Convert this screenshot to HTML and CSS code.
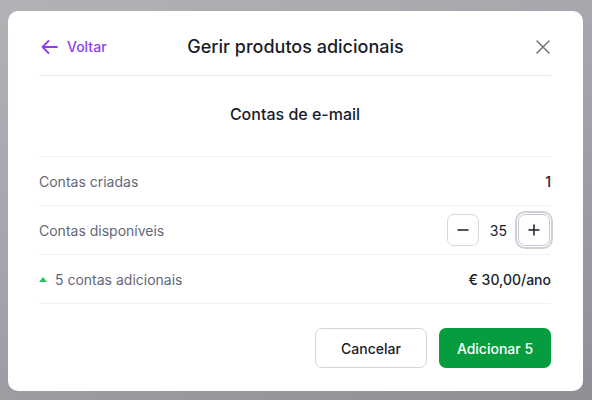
FILE: index.html
```html
<!DOCTYPE html>
<html>
<head>
<meta name="viewport" content="width=device-width, initial-scale=1">
<link rel="stylesheet" href="styles.css">
</head>
<body>

<div class="modal">
  <div class="modal-header">
    <a class="back-link" href="#">
      <svg width="19" height="18" viewBox="0 0 19 18" fill="none" stroke="currentColor" stroke-width="1.8" stroke-linecap="round" stroke-linejoin="round"><path d="M17 9H2.5M8.5 3L2.5 9l6 6"/></svg>
      Voltar
    </a>
    <h2 class="modal-title">Gerir produtos adicionais</h2>
    <span class="close-btn">
      <svg width="16" height="16" viewBox="0 0 16 16" fill="none" stroke="currentColor" stroke-width="1.5" stroke-linecap="round"><path d="M2 2l12 12M14 2L2 14"/></svg>
    </span>
  </div>

  <h3 class="section-title">Contas de e-mail</h3>

  <ul class="info-list">
    <li>
      <span class="label">Contas criadas</span>
      <span class="value">1</span>
    </li>
    <li>
      <span class="label">Contas disponíveis</span>
      <div class="stepper">
        <button class="step-btn">
          <svg width="14" height="14" viewBox="0 0 14 14" stroke="currentColor" stroke-width="1.5" stroke-linecap="round"><path d="M2 7h10"/></svg>
        </button>
        <span class="step-value">35</span>
        <button class="step-btn focused">
          <svg width="14" height="14" viewBox="0 0 14 14" stroke="currentColor" stroke-width="1.5" stroke-linecap="round"><path d="M2 7h10M7 2v10"/></svg>
        </button>
      </div>
    </li>
    <li>
      <span class="label"><span class="caret-up"></span>5 contas adicionais</span>
      <span class="value">€ 30,00/ano</span>
    </li>
  </ul>

  <div class="modal-footer">
    <button class="btn btn-secondary">Cancelar</button>
    <button class="btn btn-primary">Adicionar 5</button>
  </div>
</div>

</body>
</html>
```

FILE: styles.css
```css
* {
  box-sizing: border-box;
}

body {
  margin: 0;
  height: 400px;
  padding: 11px 9px 9px 8px;
  background: linear-gradient(160deg, #b1b2b6 0%, #a4a5aa 45%, #8e8f94 100%);
  font-family: "Inter", "Noto Sans", sans-serif;
  color: #111827;
}

/* Dialog box */
.modal {
  width: 575px;
  height: 380px;
  background: #ffffff;
  border-radius: 10px;
  padding: 0 32px 0 31px;
}

.modal-header {
  display: flex;
  align-items: center;
  justify-content: space-between;
  height: 65px;
  padding-top: 7px;
  border-bottom: 1px solid #e5e7eb;
}

.back-link {
  display: flex;
  align-items: center;
  gap: 8px;
  width: 80px;
  margin-left: 1px;
  color: #8b3ff0;
  font-size: 14px;
  font-weight: 500;
  text-decoration: none;
}

.modal-title {
  margin: 0;
  font-size: 18px;
  font-weight: 500;
  color: #1a1d2b;
}

.close-btn {
  display: flex;
  justify-content: flex-end;
  width: 80px;
  color: #6b7280;
}

.section-title {
  margin: 0;
  padding: 26px 0 30px;
  line-height: 24px;
  text-align: center;
  font-size: 16px;
  font-weight: 500;
  color: #1a1d2b;
}

/* Rows */
.info-list {
  margin: 0;
  padding: 0;
  list-style: none;
  border-top: 1px solid #f0f1f3;
}

.info-list li {
  display: flex;
  align-items: center;
  justify-content: space-between;
  height: 49px;
  border-bottom: 1px solid #f0f1f3;
  font-size: 14px;
}

.label {
  display: flex;
  align-items: center;
  color: #636878;
}

.value {
  font-weight: 500;
  color: #1a1d2b;
}

.caret-up {
  width: 0;
  height: 0;
  margin-right: 8px;
  border-left: 4px solid transparent;
  border-right: 4px solid transparent;
  border-bottom: 5px solid #22c55e;
}

.stepper {
  display: flex;
  align-items: center;
  gap: 11px;
  margin-right: 1px;
}

.step-btn {
  display: flex;
  align-items: center;
  justify-content: center;
  width: 32px;
  height: 32px;
  padding: 0;
  background: #ffffff;
  border: 1px solid #d5d8de;
  border-radius: 7px;
  color: #1a1d2b;
}

.step-btn.focused {
  border-color: #c4c8d0;
  box-shadow: 0 0 0 1px #ffffff, 0 0 0 3px #cdd0d8;
}

.step-value {
  font-size: 14px;
  color: #1a1d2b;
}

/* Footer buttons */
.modal-footer {
  display: flex;
  justify-content: flex-end;
  gap: 12px;
  padding-top: 24px;
}

.btn {
  width: 112px;
  height: 40px;
  border-radius: 7px;
  font-family: inherit;
  font-size: 14px;
  font-weight: 500;
}

.btn-secondary {
  background: #ffffff;
  border: 1px solid #d1d5db;
  color: #1a1d2b;
}

.btn-primary {
  background: #079c3e;
  border: none;
  color: #ffffff;
}
```
